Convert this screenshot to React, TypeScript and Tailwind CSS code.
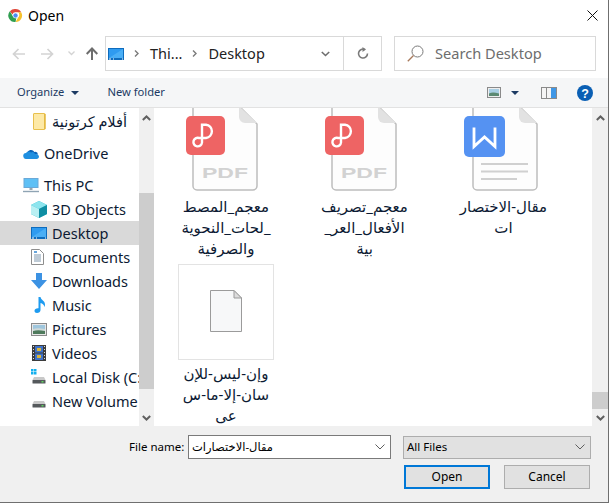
import React from "react";

const Font = '[font-family:"Noto_Sans","DejaVu_Sans",sans-serif]';

function Chrome() {
  return (
    <svg width="15" height="15" viewBox="0 0 48 48">
      <path d="M24 3a21 21 0 0 1 18.200 10.500H24a10.500 10.500 0 0 0-10 7.500L6 10.500A21 21 0 0 1 24 3z" fill="#e0483b" />
      <path d="M42.200 13.500A21 21 0 0 1 24 45l9-15.500a10.500 10.500 0 0 0-1-16z" fill="#f6c12c" />
      <path d="M24 45A21 21 0 0 1 6 10.500l9 15a10.500 10.500 0 0 0 12 4.500z" fill="#2f9e50" />
      <circle cx="24" cy="24" r="8" fill="#4c8bf5" stroke="#fff" strokeWidth="2" />
    </svg>
  );
}

function Monitor({ w = 16, h = 12 }: { w?: number; h?: number }) {
  return (
    <svg width={w} height={h} viewBox="0 0 16 12">
      <rect x="0" y="0" width="16" height="12" fill="#0f6cbd" />
      <rect x="1" y="1" width="14" height="9" fill="#2f9bf0" />
      <path d="M1 10 L15 1 V10z" fill="#4aaef5" />
      <path d="M1 11h2M5 11h1M14 11h1" stroke="#fff" />
    </svg>
  );
}

function Drive({ win }: { win?: boolean }) {
  return (
    <svg width="16" height="16" viewBox="0 0 16 16">
      {win && <path d="M0 0h2.500v2.500H0zM3 0h2.500v2.500H3zM0 3h2.500v2.500H0zM3 3h2.500v2.500H3z" fill="#12b0ee" />}
      <path d="M3 8h10l1.500 3h-13z" fill="#c9c9c9" />
      <rect x="1.500" y="11" width="13" height="3.500" rx="0.500" fill="#55595c" />
      <rect x="10.500" y="12" width="2" height="1.500" fill="#5fd35f" />
    </svg>
  );
}

function NavIcon({ kind }: { kind: string }) {
  switch (kind) {
    case "folder":
      return (
        <svg width="13" height="17" viewBox="0 0 13 17" className="ml-[2px]">
          <rect x="0.500" y="0.500" width="11.500" height="16" rx="0.500" fill="#fde9a6" stroke="#e8c04d" />
          <path d="M11.800 1v15" stroke="#e3b93f" strokeWidth="1.500" />
        </svg>
      );
    case "cloud":
      return (
        <svg width="16" height="11" viewBox="0 0 16 11">
          <path d="M4 5.500a4 4 0 0 1 7.400-1.600A3 3 0 0 1 15 6.500H4z" fill="#0a63b8" />
          <path d="M3.500 11A3 3 0 0 1 3 5a3 3 0 0 1 5-.5A3 3 0 0 1 12 6c2.200-.5 4 1 4 2.600 0 1.300-1 2.400-2.400 2.400z" fill="#1f8fe0" />
        </svg>
      );
    case "pc":
      return (
        <svg width="16" height="15" viewBox="0 0 16 15">
          <rect x="0.500" y="0" width="15" height="10" fill="#6aa9d8" />
          <rect x="1.500" y="1" width="13" height="8" fill="#5fc0f5" />
          <path d="M6.500 10h3v2h-3z" fill="#9aa7b0" />
          <path d="M0 13.500h16" stroke="#8fa4b4" strokeWidth="1.400" />
        </svg>
      );
    case "3d":
      return (
        <svg width="16" height="17" viewBox="0 0 16 17">
          <path d="M8 0l8 4v9l-8 4-8-4V4z" fill="#2bb9c8" />
          <path d="M8 0l8 4-8 4-8-4z" fill="#8de5ee" />
          <path d="M0 4l8 4v9l-8-4z" fill="#b9f0f3" />
          <path d="M8 8l8-4v9l-8 4z" fill="#0f8ea3" />
        </svg>
      );
    case "desktop":
      return <Monitor />;
    case "docs":
      return (
        <svg width="13" height="16" viewBox="0 0 13 16">
          <path d="M0.500 0.500h8l4 4v11h-12z" fill="#fff" stroke="#8e8e8e" />
          <path d="M3 6h7M3 8h7M3 10h7M3 12h7" stroke="#7e97ad" />
          <path d="M3 3h3" stroke="#3587cf" strokeWidth="1.500" />
        </svg>
      );
    case "dl":
      return (
        <svg width="16" height="16" viewBox="0 0 16 16">
          <path d="M5 0h6v7h5l-8 9-8-9h5z" fill="#3c92e3" />
        </svg>
      );
    case "music":
      return (
        <svg width="13" height="16" viewBox="0 0 13 16" className="ml-[2px]">
          <path d="M5.500 0h2c.5 3 4.500 3.500 4.500 7.500 0 1-.3 2-.8 2.500.2-2-1.700-3.500-3.700-4V13c0 1.700-1.600 3-3.500 3C2.500 16 1.500 15 1.500 13.700c0-1.500 1.700-2.700 4-2.500z" fill="#1e9bf0" />
        </svg>
      );
    case "pics":
      return (
        <svg width="16" height="13" viewBox="0 0 16 13">
          <rect x="0.500" y="0.500" width="15" height="12" fill="#e7e7e7" stroke="#8a8a8a" />
          <rect x="2" y="2" width="12" height="9" fill="#9fc6dd" />
          <path d="M2 8c3-2 6-2 12-1v4H2z" fill="#4e7a5c" />
          <path d="M2 6c3-1 6-1 12 0v2c-5-1-9-1-12 0z" fill="#cfd9d8" />
        </svg>
      );
    case "vid":
      return (
        <svg width="14" height="16" viewBox="0 0 14 16" className="ml-[1px]">
          <rect x="0" y="0" width="14" height="16" fill="#3c3c3c" />
          <rect x="3" y="1" width="8" height="6.500" fill="#3f72c9" />
          <rect x="3" y="8.500" width="8" height="6.500" fill="#3f72c9" />
          <path d="M5 3h4v3H5zM5 10h4v3H5z" fill="#d9b63a" />
          <path d="M1 1.500h1M1 4.500h1M1 7.500h1M1 10.500h1M1 13.500h1M12 1.500h1M12 4.500h1M12 7.500h1M12 10.500h1M12 13.500h1" stroke="#ddd" />
        </svg>
      );
    case "win":
      return <Drive win />;
    case "drive":
      return <Drive />;
    case "net":
      return (
        <svg width="16" height="16" viewBox="0 0 16 16">
          <rect x="1" y="0" width="5" height="1" fill="#8cbfe0" />
          <rect x="1" y="1" width="14" height="15" fill="#6aa9d8" />
        </svg>
      );
  }
  return null;
}

function NavRow({
  kind,
  label,
  indent,
  selected,
  mt,
  dir,
  gap = "w-[21px]",
}: {
  kind: string;
  label: string;
  indent?: boolean;
  selected?: boolean;
  mt?: string;
  dir?: "rtl";
  gap?: string;
}) {
  return (
    <div
      className={`flex h-6 shrink-0 items-center whitespace-nowrap ${indent ? "pl-[31px]" : "pl-[23px]"} ${
        selected ? "bg-[#d9d9d9]" : ""
      } ${mt ?? ""}`}
    >
      <span className={`flex ${gap} shrink-0 items-center`}>
        <NavIcon kind={kind} />
      </span>
      <span dir={dir} className="text-[14.500px] leading-6 text-[#0c1a33]">
        {label}
      </span>
    </div>
  );
}

function Chevron({ up, cls }: { up?: boolean; cls: string }) {
  return (
    <svg width="9" height="6" viewBox="0 0 9 6" className={cls}>
      <path
        d={up ? "M0.800 5L4.500 1.500L8.200 5" : "M0.800 1L4.500 4.500L8.200 1"}
        fill="none"
        stroke="currentColor"
        strokeWidth="2"
      />
    </svg>
  );
}

function Scrollbar({ thumbTop, thumbH, w }: { thumbTop: number; thumbH: number; w: string }) {
  return (
    <div className={`flex ${w} shrink-0 flex-col items-stretch bg-[#f0f0f0]`}>
      <div className="flex h-[16px] shrink-0 items-center justify-center pt-1">
        <Chevron up cls="text-[#606060]" />
      </div>
      <div className="min-h-0 flex-1">
        <div style={{ height: thumbTop }} />
        <div className="bg-[#cdcdcd]" style={{ height: thumbH }} />
      </div>
      <div className="flex h-[16px] shrink-0 items-center justify-center">
        <Chevron cls="text-[#606060]" />
      </div>
    </div>
  );
}

function FileSheet({ children }: { children: React.ReactNode }) {
  return (
    <svg width="66" height="83" viewBox="0 0 66 83" className="block">
      <path
        d="M1 -10V78a4 4 0 0 0 4 4H61a4 4 0 0 0 4-4V16L48 -1V-10"
        fill="#fdfdfd"
        stroke="#bdbdbd"
        strokeWidth="1.500"
      />
      <path d="M47 -2V9a6 6 0 0 0 6 6H65z" fill="#e2e2e2" />
      {children}
    </svg>
  );
}

function PdfIcon({ cls }: { cls: string }) {
  return (
    <div className={`relative h-[85px] w-[72px] shrink-0 ${cls}`}>
      <div className="absolute left-[6px] top-0">
        <FileSheet>
          <text
            x="33"
            y="70"
            textAnchor="middle"
            fontFamily="Liberation Sans, sans-serif"
            fontWeight="700"
            fontSize="15.500"
            textLength="46"
            lengthAdjust="spacingAndGlyphs"
            fill="#d2d2d2"
          >
            PDF
          </text>
        </FileSheet>
      </div>
      <svg width="39" height="39" viewBox="0 0 39 39" className="absolute left-0 top-[8px]">
        <rect width="39" height="39" rx="5" fill="#ee6464" />
        <path
          d="M16 26.500V8.700h4a6.700 6.700 0 0 1 0 13.300H13a4.300 4.300 0 1 0 3 4.500"
          fill="none"
          stroke="#fff"
          strokeWidth="2.400"
          strokeLinecap="round"
        />
      </svg>
    </div>
  );
}

function WordIcon() {
  return (
    <div className="relative mr-[5px] h-[85px] w-[74px] shrink-0">
      <div className="absolute left-[8px] top-0">
        <FileSheet>
          <path d="M9 56H56M9 63.500H56M9 71H45" stroke="#d0d0d0" strokeWidth="2.200" />
        </FileSheet>
      </div>
      <svg width="41" height="41" viewBox="0 0 41 41" className="absolute left-0 top-[8px]">
        <rect width="41" height="41" rx="5" fill="#5592f2" />
        <path d="M10 11.500v19l10.500-9.500L31 30.500v-19" fill="none" stroke="#fff" strokeWidth="2.800" />
      </svg>
    </div>
  );
}

function GenericTile() {
  return (
    <div className="flex h-[96px] w-[96px] shrink-0 items-center justify-center border border-[#e3e3e3]">
      <svg width="32" height="42" viewBox="0 0 32 42" className="-mt-[3px]">
        <path d="M0.500 0.500H24L31.500 8V41.500H0.500z" fill="#f7f8f9" stroke="#9b9b9b" />
        <path d="M24 0.500V8H31.500z" fill="#dcdcdc" stroke="#9b9b9b" />
      </svg>
    </div>
  );
}

function FileLabel({ lines }: { lines: string[] }) {
  return (
    <div dir="rtl" className="mt-[3px] w-[104px] text-center text-[15px] leading-[21px] text-[#0c1a33]">
      {lines.map((l) => (
        <div key={l} className="whitespace-nowrap">
          {l}
        </div>
      ))}
    </div>
  );
}

function Caret({ color = "#1c3a63" }: { color?: string }) {
  return (
    <svg width="8" height="4" viewBox="0 0 8 4">
      <path d="M0 0h8L4 4z" fill={color} />
    </svg>
  );
}

function DropArrow() {
  return (
    <svg width="10" height="6" viewBox="0 0 10 6">
      <path d="M0.500 0.500L5 5L9.500 0.500" fill="none" stroke="#5f5f5f" />
    </svg>
  );
}

export default function App() {
  return (
    <div className={`flex h-[503px] w-[611px] flex-col overflow-hidden bg-white ${Font}`}>
      <div className="flex h-[503px] w-[609px] flex-col border-r border-[#6f6f6f] bg-white">
        {/* title bar */}
        <div className="flex h-[33px] shrink-0 items-center pb-[2px] pl-[8px] pr-[10px]">
          <Chrome />
          <span className="ml-[5px] text-[14px] text-black">Open</span>
          <svg width="11" height="11" viewBox="0 0 11 11" className="ml-auto">
            <path d="M0.500 0.500L10.500 10.500M10.500 0.500L0.500 10.500" stroke="#111" />
          </svg>
        </div>

        {/* nav bar */}
        <div className="flex h-[45px] shrink-0 items-start pt-[3px]">
          <div className="flex h-[35px] w-[105px] shrink-0 items-center pl-[12px]">
            <svg width="13" height="12" viewBox="0 0 13 12">
              <path d="M13 6H2M6.500 1L1.500 6l5 5" fill="none" stroke="#d3d3d3" strokeWidth="1.700" />
            </svg>
            <svg width="13" height="12" viewBox="0 0 13 12" className="ml-[16px]">
              <path d="M0 6h11M6.500 1l5 5-5 5" fill="none" stroke="#d3d3d3" strokeWidth="1.700" />
            </svg>
            <svg width="7" height="5" viewBox="0 0 7 5" className="ml-[14px]">
              <path d="M0.500 0.500L3.500 3.500L6.500 0.500" fill="none" stroke="#d3d3d3" strokeWidth="1.300" />
            </svg>
            <svg width="12" height="13" viewBox="0 0 12 13" className="ml-[11px]">
              <path d="M6 13V2M0.700 7L6 1.500 11.300 7" fill="none" stroke="#6d6d6d" strokeWidth="2" />
            </svg>
          </div>
          <div className="flex h-[35px] w-[277px] shrink-0 items-center border border-[#d9d9d9]">
            <span className="ml-[2px] flex">
              <Monitor w={16} h={12} />
            </span>
            <svg width="5" height="7" viewBox="0 0 5 7" className="ml-[10px]">
              <path d="M1 0.500L4 3.500L1 6.500" fill="none" stroke="#7a7a7a" strokeWidth="1.400" />
            </svg>
            <span className="ml-[11px] text-[14.500px] text-[#222]">Thi...</span>
            <svg width="5" height="7" viewBox="0 0 5 7" className="ml-[10px]">
              <path d="M1 0.500L4 3.500L1 6.500" fill="none" stroke="#7a7a7a" strokeWidth="1.400" />
            </svg>
            <span className="ml-[11px] text-[14.500px] text-[#222]">Desktop</span>
            <svg width="9" height="6" viewBox="0 0 9 6" className="ml-auto mr-[13px]">
              <path d="M0.800 1L4.500 4.500L8.200 1" fill="none" stroke="#6d6d6d" strokeWidth="1.600" />
            </svg>
            <div className="flex h-full w-[38px] shrink-0 items-center justify-center border-l border-[#d9d9d9]">
              <svg width="12" height="13" viewBox="0 0 12 13">
                <path d="M10.500 6.500a4.500 4.500 0 1 1-2.500-4" fill="none" stroke="#7a7a7a" strokeWidth="1.600" />
                <path d="M5.500 0l3.500 2.500L5.500 5z" fill="#7a7a7a" />
              </svg>
            </div>
          </div>
          <div className="ml-[12px] flex h-[35px] w-[202px] shrink-0 items-center border border-[#d9d9d9] pl-[12px]">
            <svg width="17" height="17" viewBox="0 0 17 17">
              <circle cx="10.500" cy="6.500" r="5.500" fill="none" stroke="#7a7a7a" />
              <path d="M6.500 10.500L0.800 16.200" stroke="#a87a5c" strokeWidth="1.300" />
            </svg>
            <span className="ml-[11px] text-[14.600px] text-[#6d6d6d]">Search Desktop</span>
          </div>
        </div>

        {/* toolbar */}
        <div className="flex h-[30px] shrink-0 items-center border-b border-[#e2e2e2] bg-[#f5f6f7] pl-[17px] pr-[15px]">
          <span className="text-[11.100px] text-[#1c3a63]">Organize</span>
          <span className="ml-[7px] flex">
            <Caret />
          </span>
          <span className="ml-[28px] text-[11.200px] text-[#1c3a63]">New folder</span>
          <svg width="14" height="11" viewBox="0 0 14 11" className="ml-auto">
            <rect x="0.500" y="0.500" width="13" height="10" fill="#eee" stroke="#8a8a8a" />
            <rect x="2" y="2" width="10" height="7" fill="#a9cfe4" />
            <path d="M2 6.500c3-1.500 6-1 10 0V9H2z" fill="#5c8a72" />
          </svg>
          <span className="ml-[10px] flex">
            <Caret />
          </span>
          <svg width="16" height="12" viewBox="0 0 16 12" className="ml-[22px]">
            <rect x="0.500" y="0.500" width="15" height="11" fill="#f4f4f4" stroke="#8a8a8a" />
            <rect x="10" y="1" width="5" height="10" fill="#3f97e6" />
            <path d="M5.500 1v10" stroke="#8a8a8a" />
          </svg>
          <svg width="16" height="16" viewBox="0 0 16 16" className="ml-[20px]">
            <circle cx="8" cy="8" r="8" fill="#0a5fb4" />
            <text x="8" y="12.500" textAnchor="middle" fontFamily="Liberation Sans, sans-serif" fontWeight="700" fontSize="12.500" fill="#fff">
              ?
            </text>
          </svg>
        </div>

        {/* content */}
        <div className="flex h-[318px] shrink-0 overflow-hidden">
          <div className="flex w-[139px] shrink-0 flex-col overflow-hidden pt-[1px]">
            <NavRow kind="folder" label="أفلام كرتونية" indent dir="rtl" />
            <NavRow kind="cloud" label="OneDrive" mt="mt-[8px]" />
            <NavRow kind="pc" label="This PC" mt="mt-[8px]" />
            <NavRow kind="3d" label="3D Objects" indent />
            <NavRow kind="desktop" label="Desktop" indent selected />
            <NavRow kind="docs" label="Documents" indent />
            <NavRow kind="dl" label="Downloads" indent />
            <NavRow kind="music" label="Music" indent />
            <NavRow kind="pics" label="Pictures" indent />
            <NavRow kind="vid" label="Videos" indent />
            <NavRow kind="win" label="Local Disk (C:)" indent />
            <NavRow kind="drive" label="New Volume (D:)" indent />
            <NavRow kind="net" label="Network" mt="mt-[9px]" />
          </div>
          <Scrollbar w="w-[15px]" thumbTop={69} thumbH={196} />
          <div className="w-[3px] shrink-0" />
          <div className="min-w-0 flex-1 overflow-hidden">
            <div className="grid grid-cols-[138px_139px_139px]">
              <div className="flex flex-col items-center">
                <PdfIcon cls="mr-[9px]" />
                <FileLabel lines={["معجم_المصط", "_لحات_النحوية", "والصرفية"]} />
              </div>
              <div className="flex flex-col items-center">
                <PdfIcon cls="mr-[7px]" />
                <FileLabel lines={["معجم_تصريف", "الأفعال_العر_", "بية"]} />
              </div>
              <div className="flex flex-col items-center">
                <WordIcon />
                <FileLabel lines={["مقال-الاختصار", "ات"]} />
              </div>
              <div className="col-start-1 mt-[5px] flex flex-col items-center">
                <GenericTile />
                <FileLabel lines={["وإن-ليس-للإن", "سان-إلا-ما-س", "عى"]} />
              </div>
            </div>
          </div>
          <Scrollbar w="w-[16px]" thumbTop={268} thumbH={17} />
        </div>

        {/* footer */}
        <div className="flex min-h-0 flex-1 flex-col border-b border-[#6f6f6f] bg-[#f0f0f0] pr-[15px]">
          <div className="mt-[9px] flex h-[24px] shrink-0 items-center">
            <span className="ml-[129px] w-[53px] shrink-0 whitespace-nowrap text-[11.500px] text-black">File name:</span>
            <div className="ml-[6px] flex h-[24px] w-[203px] shrink-0 items-center border border-[#7a7a7a] bg-white pl-[3px] pr-[5px]">
              <span className="text-[11.500px] text-black">مقال-الاختصارات</span>
              <span className="ml-auto flex">
                <DropArrow />
              </span>
            </div>
            <div className="ml-[12px] flex h-[23px] w-[188px] shrink-0 items-center border border-[#adadad] bg-[#e1e1e1] pl-[3px] pr-[5px]">
              <span className="text-[11.500px] text-black">All Files</span>
              <span className="ml-auto flex">
                <DropArrow />
              </span>
            </div>
          </div>
          <div className="mt-[6px] flex justify-end gap-[14px] pr-[3px]">
            <button className="h-[24px] w-[86px] border-2 border-[#0078d7] bg-[#e1e1e1] text-[12px] leading-none text-black">
              Open
            </button>
            <button className="h-[24px] w-[86px] border border-[#adadad] bg-[#e1e1e1] text-[12px] leading-none text-black">
              Cancel
            </button>
          </div>
        </div>
      </div>
    </div>
  );
}
